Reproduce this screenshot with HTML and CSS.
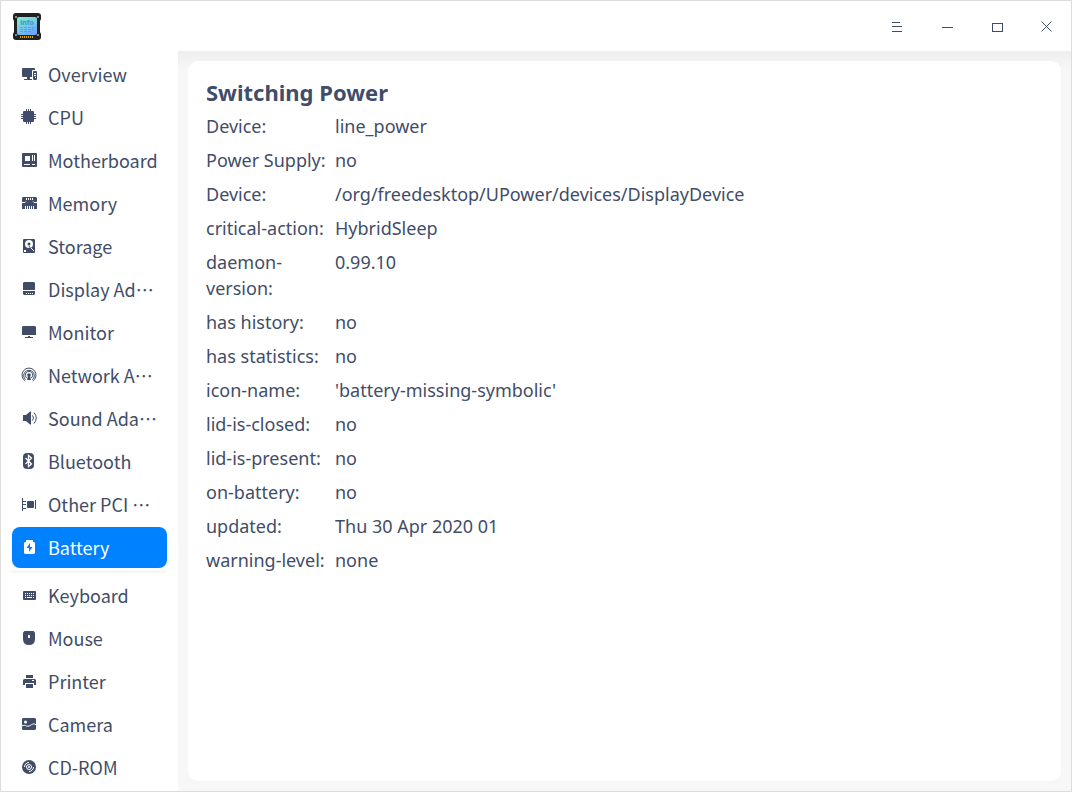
FILE: index.html
```html
<!DOCTYPE html>
<html lang="en">
<head>
<meta charset="utf-8">
<title>Device Info</title>
<link rel="stylesheet" href="styles.css">
</head>
<body>
<div class="window">
  <header class="titlebar">
    <svg class="logo" width="30" height="30" viewBox="0 0 30 30" role="img" aria-label="Device Info">
      <defs><linearGradient id="screen" x1="0" y1="0" x2="0.6" y2="1"><stop offset="0" stop-color="#7ff0d0"/><stop offset="0.5" stop-color="#76cfea"/><stop offset="1" stop-color="#6ba6ff"/></linearGradient></defs>
      <path d="M4 2h22a3 3 0 0 1 3 3v3l-1 2v11l1 2v3a3 3 0 0 1-3 3H4a3 3 0 0 1-3-3v-3l1-2V10L1 8V5a3 3 0 0 1 3-3z" fill="#202020"/>
      <circle cx="4" cy="6" r="1" fill="#aaa"/><circle cx="26" cy="6" r="1" fill="#aaa"/><circle cx="4" cy="24" r="1" fill="#aaa"/><circle cx="26" cy="24" r="1" fill="#aaa"/>
      <rect x="5" y="6" width="20" height="18" rx="2" fill="url(#screen)"/>
      <text class="logo-text" x="15" y="14" text-anchor="middle">info</text>
      <path d="M8 16.5h14M8 18.5h14M8 20.5h11" stroke="#427fa7" stroke-dasharray="3 1" opacity=".4"/>
      <path d="M8 26h13" stroke="#eba51c" stroke-width="2" stroke-dasharray="1 1"/>
    </svg>
    <div class="controls">
      <button class="control" aria-label="Menu"><svg width="12" height="12" viewBox="0 0 12 12"><path d="M1 1.5h8M1 5.5h10M1 10.5h10"/></svg></button>
      <button class="control" aria-label="Minimize"><svg width="12" height="12" viewBox="0 0 12 12"><path d="M1 6.5h11"/></svg></button>
      <button class="control" aria-label="Maximize"><svg width="12" height="12" viewBox="0 0 12 12"><path d="M1.5 2.5h10v8h-10z"/></svg></button>
      <button class="control" aria-label="Close"><svg width="12" height="12" viewBox="0 0 12 12"><path class="cross" d="M0.5 0.5l10 10M10.5 0.5l-10 10"/></svg></button>
    </div>
  </header>
  <div class="content">
    <nav class="sidebar" aria-label="Devices">
      <a class="item" href="#overview"><svg class="icon" viewBox="0 0 16 16"><path d="M2 2h11a1 1 0 0 1 1 1v1h-2a1 1 0 0 0-1 1v6H2a1 1 0 0 1-1-1V3a1 1 0 0 1 1-1zM6 11h3v2h2v1H3v-1h3z"/><path fill-rule="evenodd" d="M13 5h2a1 1 0 0 1 1 1v7a1 1 0 0 1-1 1h-2a1 1 0 0 1-1-1V6a1 1 0 0 1 1-1zM13 7h2v1h-2zM13 9h2v1h-2zM14 11h1v1h-1z"/></svg>Overview</a>
      <a class="item" href="#cpu"><svg class="icon" viewBox="0 0 16 16"><rect x="2" y="2" width="11" height="11" rx="1"/><path class="line" d="M5.5 0v15M7.5 0v15M9.5 0v15M0 5.5h15M0 7.5h15M0 9.5h15"/></svg>CPU</a>
      <a class="item" href="#motherboard"><svg class="icon" viewBox="0 0 16 16"><path fill-rule="evenodd" d="M2 1h13a1 1 0 0 1 1 1v12a1 1 0 0 1-1 1H2a1 1 0 0 1-1-1V2a1 1 0 0 1 1-1zM4 4v5h5V4zM11 3v6h1V3zM13 3v6h1V3zM3 12v1h6v-1zM11 12v1h3v-1z"/></svg>Motherboard</a>
      <a class="item" href="#memory"><svg class="icon" viewBox="0 0 16 16"><path d="M2 2h13l1 1v11H1V3z"/><path class="cut" d="M5.500 3v2M7.500 3v2M9.500 3v2M11.500 3v2M1 7.500h3l1-1M16 7.500h-3l-1-1M4.500 11v3M6.500 11v3M8.500 11v3M10.500 11v3M12.500 11v3"/></svg>Memory</a>
      <a class="item" href="#storage"><svg class="icon" viewBox="0 0 16 16"><rect x="2" y="1" width="12" height="14" rx="1"/><circle cx="8" cy="6" r="4" fill="#fff"/><circle cx="8" cy="6" r="1.5"/><path class="cut" d="M9 9l4 4"/><path d="M8 8l3 5" stroke="#414d68"/><path fill="#fff" d="M3 12h2v2H3z"/></svg>Storage</a>
      <a class="item" href="#display"><svg class="icon" viewBox="0 0 16 16"><path d="M3 1h10l1 1v7H2V2zM2 10h12v3l-1 1H3l-1-1z"/><path class="cut" d="M5 12.5h1M7 12.5h1M9 12.5h1M11 12.5h1"/></svg><span>Display Ad<span lang="zh-CN">…</span></span></a>
      <a class="item" href="#monitor"><svg class="icon" viewBox="0 0 16 16"><path d="M2 2h12l1 1v8H1V3zM7 12h2v1h3v1H4v-1h3z"/></svg>Monitor</a>
      <a class="item" href="#network"><svg class="icon" viewBox="0 0 16 16"><circle cx="8" cy="8" r="1.800"/><path d="M7 9h2l1 4H6z"/><path class="line" d="M5.800 11a3.700 3.700 0 1 1 4.400 0M4.600 12.700a5.300 5.300 0 1 1 6.800 0M4.300 14a7 7 0 1 1 7.400 0"/></svg><span>Network A<span lang="zh-CN">…</span></span></a>
      <a class="item" href="#sound"><svg class="icon" viewBox="0 0 16 16"><path d="M2 5h3l4-3.500h1v13H9L5 11H2z"/><path class="line" d="M11.500 5.500q2 2.500 0 5M13 2.500q4.500 5.500 0 11"/></svg><span>Sound Ada<span lang="zh-CN">…</span></span></a>
      <a class="item" href="#bluetooth"><svg class="icon" viewBox="0 0 16 16"><rect x="2" y="0" width="11" height="16" rx="4"/><path class="cut" stroke-width="1.300" d="M4.500 5l6 6-3 2.500v-11l3 2.500-6 6"/></svg>Bluetooth</a>
      <a class="item" href="#pci"><svg class="icon" viewBox="0 0 16 16"><path class="line" d="M1.500 2v13M2 5.500h3M2 8.500h3M2 12.500h3M14.500 4v9"/><rect x="6" y="5" width="7" height="7" rx="1"/></svg><span>Other PCI <span lang="zh-CN">…</span></span></a>
      <a class="item active" href="#battery" aria-current="page"><svg class="icon" viewBox="0 0 16 16"><path d="M5 1h7v2h1l1 1v10l-1 1H4l-1-1V4l1-1h1z"/><path fill="#0081ff" d="M9 4L5.500 9H8v4l3.500-5H9z"/></svg>Battery</a>
      <hr class="divider">
      <a class="item" href="#keyboard"><svg class="icon" viewBox="0 0 16 16"><rect x="2" y="4" width="13" height="9" rx="1"/><path class="cut" d="M4 6.500h9M4 8.500h9" stroke-dasharray="1 1"/><path class="cut" d="M4 10.500h1M6 10.500h5M12 10.500h1"/></svg>Keyboard</a>
      <a class="item" href="#mouse"><svg class="icon" viewBox="0 0 16 16"><path d="M3.500 1h9L14 2.500V9q0 6-6 6T2 9V2.500z"/><path fill="#fff" d="M7 5h2v3H7z"/></svg>Mouse</a>
      <a class="item" href="#printer"><svg class="icon" viewBox="0 0 16 16"><path d="M5 2h7v3H5zM3 6h11l1 1v5h-2v-2H4v2H2V7zM5 11h7v4H5z"/><path class="cut" d="M11 7.500h2"/></svg>Printer</a>
      <a class="item" href="#camera"><svg class="icon" viewBox="0 0 16 16"><path d="M2 2h12l1 1v10l-1 1H2l-1-1V3z"/><circle cx="4.500" cy="6" r="1.500" fill="#fff"/><path class="cut" d="M1 10c3-2 4 1 7 0s3-3 7-1.500"/></svg>Camera</a>
      <a class="item" href="#cdrom"><svg class="icon" viewBox="0 0 16 16"><circle cx="8" cy="8" r="7"/><circle class="cut" cx="8" cy="8" r="2.500"/><circle cx="8" cy="8" r="1" fill="#fff"/><path class="cut" d="M3.500 8A4.500 4.500 0 0 1 8 3.500M12.500 8A4.500 4.500 0 0 1 8 12.500"/></svg>CD-ROM</a>
    </nav>
    <main class="main">
      <section class="card">
        <h1 class="title">Switching Power</h1>
        <table class="details">
          <tr><th scope="row">Device:</th><td>line_power</td></tr>
          <tr><th scope="row">Power Supply:</th><td>no</td></tr>
          <tr><th scope="row">Device:</th><td>/org/freedesktop/UPower/devices/DisplayDevice</td></tr>
          <tr><th scope="row">critical-action:</th><td>HybridSleep</td></tr>
          <tr><th scope="row">daemon-version:</th><td>0.99.10</td></tr>
          <tr><th scope="row">has history:</th><td>no</td></tr>
          <tr><th scope="row">has statistics:</th><td>no</td></tr>
          <tr><th scope="row">icon-name:</th><td>'battery-missing-symbolic'</td></tr>
          <tr><th scope="row">lid-is-closed:</th><td>no</td></tr>
          <tr><th scope="row">lid-is-present:</th><td>no</td></tr>
          <tr><th scope="row">on-battery:</th><td>no</td></tr>
          <tr><th scope="row">updated:</th><td>Thu 30 Apr 2020 01</td></tr>
          <tr><th scope="row">warning-level:</th><td>none</td></tr>
        </table>
      </section>
    </main>
  </div>
</div>
</body>
</html>
```

FILE: styles.css
```css
* { box-sizing: border-box; }
body {
  margin: 0;
  color: #414d68;
  font-family: "Noto Sans", sans-serif;
  font-size: 18px;
}
.window {
  display: flex;
  flex-direction: column;
  min-height: 100vh;
  border: 1px solid #dcdcdc;
  background: #fff;
}
.titlebar {
  display: flex;
  align-items: center;
  justify-content: space-between;
  height: 50px;
  padding-left: 11px;
}
.logo-text { font: bold 7px "Noto Sans", sans-serif; fill: #4796a4; }
.controls { display: flex; }
.control {
  display: flex;
  align-items: center;
  justify-content: center;
  width: 50px;
  height: 50px;
  padding: 2px 0 0 2px;
  border: 0;
  background: none;
}
.control svg { fill: none; stroke: #414d68; shape-rendering: crispEdges; }
.control .cross { shape-rendering: auto; }
.content { display: flex; flex: 1; }
.sidebar {
  display: flex;
  flex-direction: column;
  gap: 2px;
  flex: 0 0 177px;
  padding: 3px 11px 2px;
}
.item {
  display: flex;
  align-items: center;
  gap: 11px;
  height: 41px;
  padding: 0 0 2px 9px;
  border-radius: 8px;
  color: #414d68;
  font-family: "Noto Sans CJK SC", sans-serif;
  font-size: 18px;
  line-height: 28px;
  text-decoration: none;
  white-space: nowrap;
}
.active { background: #0081ff; color: #fff; }
.icon { flex: none; width: 16px; height: 16px; fill: currentColor; }
.line { fill: none; stroke: currentColor; }
.cut { fill: none; stroke: #fff; }
.divider { width: 100%; height: 3px; margin: 0; border: 0; background: #f7f7f7; }
.main {
  display: flex;
  flex: 1;
  padding: 10px;
  background: linear-gradient(#eee, #f7f7f7 20px);
}
.card {
  flex: 1;
  padding: 15px 18px;
  border-radius: 10px;
  background: #fff;
}
.title { margin: 0 0 1px; font-size: 22px; line-height: 32px; }
.details { width: 100%; border-collapse: collapse; table-layout: fixed; line-height: 26px; }
.details th, .details td { padding: 4px 0; text-align: left; vertical-align: top; }
.details th { width: 129px; padding-right: 8px; font-weight: normal; }
```
